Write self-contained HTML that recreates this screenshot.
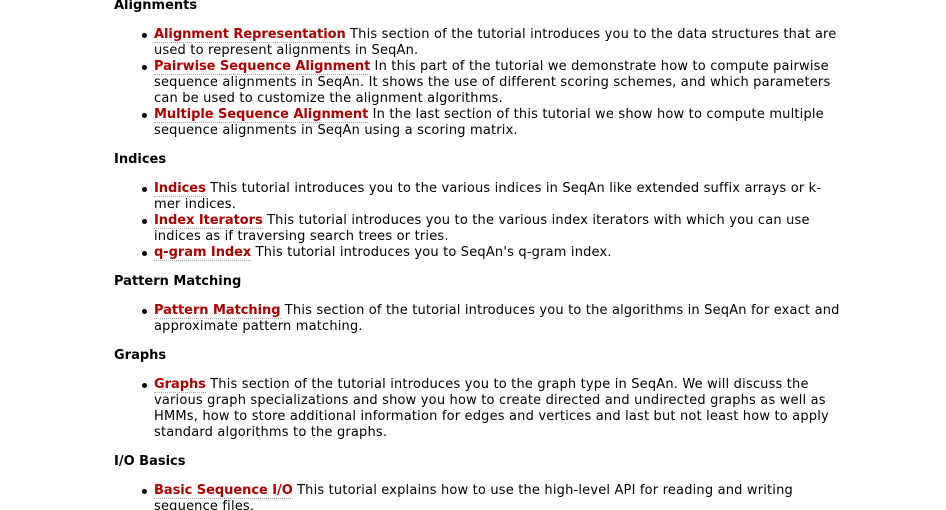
<!DOCTYPE html>
<html><head><meta charset="utf-8"><style>
html,body{margin:0;padding:0;background:#fff;width:946px;height:510px;overflow:hidden;position:relative}
div{position:absolute;white-space:nowrap;font-family:"DejaVu Sans","Liberation Sans",sans-serif;font-size:13px;line-height:16px;color:#000;left:154px;letter-spacing:0.18px;margin-top:2px}
.h{left:114px;font-weight:bold;letter-spacing:0}
a{color:#b00000;font-weight:bold;text-decoration:none;border-bottom:1px dotted #aaa;letter-spacing:-0.05px}
.b::before{content:"";position:absolute;left:-12px;top:6px;width:5px;height:5px;border-radius:50%;background:#000}
</style></head><body>
<div class="h" style="top:-4px">Alignments</div>
<div class="b" style="top:25px"><a>Alignment Representation</a> This section of the tutorial introduces you to the data structures that are</div>
<div style="top:41px">used to represent alignments in SeqAn.</div>
<div class="b" style="top:57px"><a>Pairwise Sequence Alignment</a> In this part of the tutorial we demonstrate how to compute pairwise</div>
<div style="top:73px">sequence alignments in SeqAn. It shows the use of different scoring schemes, and which parameters</div>
<div style="top:89px">can be used to customize the alignment algorithms.</div>
<div class="b" style="top:105px"><a>Multiple Sequence Alignment</a> In the last section of this tutorial we show how to compute multiple</div>
<div style="top:121px">sequence alignments in SeqAn using a scoring matrix.</div>
<div class="h" style="top:150px">Indices</div>
<div class="b" style="top:179px"><a>Indices</a> This tutorial introduces you to the various indices in SeqAn like extended suffix arrays or k-</div>
<div style="top:195px">mer indices.</div>
<div class="b" style="top:211px"><a>Index Iterators</a> This tutorial introduces you to the various index iterators with which you can use</div>
<div style="top:227px">indices as if traversing search trees or tries.</div>
<div class="b" style="top:243px"><a>q-gram Index</a> This tutorial introduces you to SeqAn's q-gram index.</div>
<div class="h" style="top:272px">Pattern Matching</div>
<div class="b" style="top:301px"><a>Pattern Matching</a> This section of the tutorial introduces you to the algorithms in SeqAn for exact and</div>
<div style="top:317px">approximate pattern matching.</div>
<div class="h" style="top:346px">Graphs</div>
<div class="b" style="top:375px"><a>Graphs</a> This section of the tutorial introduces you to the graph type in SeqAn. We will discuss the</div>
<div style="top:391px">various graph specializations and show you how to create directed and undirected graphs as well as</div>
<div style="top:407px">HMMs, how to store additional information for edges and vertices and last but not least how to apply</div>
<div style="top:423px">standard algorithms to the graphs.</div>
<div class="h" style="top:452px">I/O Basics</div>
<div class="b" style="top:481px"><a>Basic Sequence I/O</a> This tutorial explains how to use the high-level API for reading and writing</div>
<div style="top:497px">sequence files.</div>
</body></html>
